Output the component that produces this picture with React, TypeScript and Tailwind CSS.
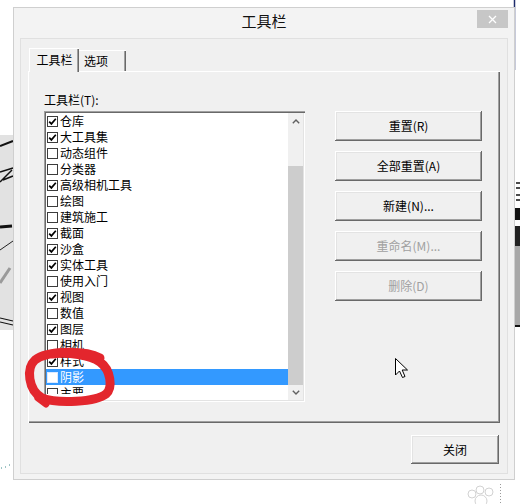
const toolbars: [string, boolean][] = [
  ['仓库', true],
  ['大工具集', true],
  ['动态组件', false],
  ['分类器', false],
  ['高级相机工具', true],
  ['绘图', false],
  ['建筑施工', false],
  ['截面', true],
  ['沙盒', true],
  ['实体工具', true],
  ['使用入门', false],
  ['视图', true],
  ['数值', false],
  ['图层', true],
  ['相机', false],
  ['样式', true],
  ['阴影', false],
  ['主要', false],
];

const SELECTED = 16;

const sideButtons = [
  { label: '重置(R)', disabled: false },
  { label: '全部重置(A)', disabled: false },
  { label: '新建(N)...', disabled: false },
  { label: '重命名(M)...', disabled: true },
  { label: '删除(D)', disabled: true },
];

const raised =
  'shadow-[inset_-1px_-1px_#696969,inset_1px_1px_#ffffff,inset_-2px_-2px_#a0a0a0,inset_2px_2px_#e3e3e3]';

function CheckBox({ checked, selected }: { checked: boolean; selected: boolean }) {
  return (
    <span
      className={`ml-[1px] mr-[2px] flex h-[11px] w-[11px] shrink-0 items-center justify-center border bg-white ${
        selected ? 'border-[#dbe9ff]' : 'border-[#3c3c3c]'
      }`}
    >
      {checked && (
        <svg width="9" height="9" viewBox="0 0 9 9">
          <path d="M1.2 4.6 L3.4 6.9 L7.8 1.8" fill="none" stroke="#000" strokeWidth="1.7" />
        </svg>
      )}
    </span>
  );
}

function Chevron({ up }: { up: boolean }) {
  return (
    <svg width="8" height="5" viewBox="0 0 8 5">
      <path
        d={up ? 'M0.8 4.2 L4 1 L7.2 4.2' : 'M0.8 0.8 L4 4 L7.2 0.8'}
        fill="none"
        stroke="#606060"
        strokeWidth="1.4"
      />
    </svg>
  );
}

function ListBox() {
  return (
    <div className="mt-[3px] flex h-[291px] w-[261px] p-[2px] shadow-[inset_1px_1px_#a0a0a0,inset_2px_2px_#696969,inset_-1px_-1px_#ffffff,inset_-2px_-2px_#e3e3e3]">
      {/* rows */}
      <div className="h-full w-[242px] bg-white">
        <div className="h-[281px] overflow-hidden">
          {toolbars.map(([name, checked], i) => {
            const selected = i === SELECTED;
            return (
              <div
                key={name}
                className={`flex h-[16px] items-center leading-[16px] ${
                  selected ? 'bg-[#3399ff] text-white' : 'text-black'
                }`}
              >
                <CheckBox checked={checked} selected={selected} />
                <span>{name}</span>
              </div>
            );
          })}
        </div>
      </div>

      {/* scrollbar */}
      <div className="flex h-full w-[15px] flex-col bg-[#f0f0f0]">
        <div className="flex h-[16px] items-center justify-center">
          <Chevron up />
        </div>
        <div className="flex flex-1 flex-col pt-[37px]">
          <div className="flex-1 bg-[#cdcdcd]" />
        </div>
        <div className="flex h-[15px] items-center justify-center">
          <Chevron up={false} />
        </div>
      </div>
    </div>
  );
}

export default function App() {
  return (
    <div className="relative h-[504px] w-[520px] overflow-hidden bg-white pl-[13px] pt-[7px] font-['Noto_Sans_CJK_SC','Noto_Sans',sans-serif] text-[12px] text-black">
      {/* background scene behind the dialog */}
      <svg className="absolute inset-0" width="520" height="504" viewBox="0 0 520 504">
        <rect x="0" y="135" width="13" height="195" fill="#e2e2e2" />
        <path d="M0 146 L13 141" stroke="#111" strokeWidth="2" />
        <path d="M0 172 L13 168 M0 182 L12 170 M3 180 L13 176" stroke="#111" strokeWidth="1.5" />
        <path d="M0 227 L12 226" stroke="#111" strokeWidth="3" />
        <path d="M0 250 L13 241" stroke="#222" strokeWidth="1" />
        <path d="M0 283 L10 268" stroke="#9a9a9a" strokeWidth="3" />
        <path d="M0 318 L13 321 M0 322 L13 325" stroke="#111" strokeWidth="1.2" />
        <path d="M514.5 0 L514.5 70" stroke="#1d2b6b" strokeWidth="1.5" />
        <rect x="515" y="245" width="5" height="80" fill="#a8a8a8" />
        <path d="M516 183 L520 183 M516 188 L520 188 M516 195 L520 195 M516 200 L520 200" stroke="#111" strokeWidth="1.5" />
        <rect x="515" y="208" width="5" height="12" fill="#111" />
        <rect x="515" y="226" width="5" height="20" fill="#222" />
        <path d="M515 326 L520 326" stroke="#111" strokeWidth="2" />
        <path d="M1 468 L2 468 M5 467 L6 467 M9 465 L10 465" stroke="#3a8a8a" strokeWidth="1" />
        <path d="M500.5 484 L500.5 504" stroke="#9a9a9a" strokeWidth="1" strokeDasharray="1 2" />
        <circle cx="472" cy="494" r="4" fill="none" stroke="#d2d2d2" />
        <circle cx="480" cy="490" r="4" fill="none" stroke="#d2d2d2" />
        <circle cx="489" cy="492" r="4" fill="none" stroke="#d2d2d2" />
        <circle cx="481" cy="501" r="6" fill="none" stroke="#d2d2d2" />
      </svg>

      {/* dialog */}
      <div className="relative flex h-[473px] w-[502px] flex-col border border-[#cfcfcf] bg-[#f3f3f3]">
        {/* title bar */}
        <div className="grid h-[30px] grid-cols-[1fr_auto_1fr]">
          <div />
          <div className="pt-[3px] text-[15px] leading-[20px] text-[#111]">工具栏</div>
          <div className="flex justify-end">
            <div className="mr-[6px] mt-[2px] flex h-[18px] w-[31px] items-center justify-center bg-[#c7c7c7]">
              <svg width="9" height="9" viewBox="0 0 9 9">
                <path d="M1 1 L8 8 M8 1 L1 8" stroke="#fff" strokeWidth="1.3" />
              </svg>
            </div>
          </div>
        </div>

        {/* client area */}
        <div className="mx-[6px] mb-[5px] flex flex-1 flex-col border border-[#e0e0e0] bg-[#f0f0f0] px-[7px] pt-[9px]">
          {/* tabs */}
          <div className="relative z-10 ml-[1px] flex h-[23px] items-end">
            <div className="-mb-px flex h-[24px] w-[50px] items-center justify-center border-l border-t border-white bg-[#f0f0f0] pb-[1px] shadow-[inset_-1px_0_#696969,inset_-2px_0_#a0a0a0]">
              工具栏
            </div>
            <div className="flex h-[21px] w-[47px] items-center border-t border-white pl-[5px] shadow-[inset_-1px_0_#696969,inset_-2px_0_#a0a0a0]">
              选项
            </div>
          </div>

          {/* tab panel */}
          <div className="flex h-[352px] border-l border-t border-white shadow-[inset_-1px_-1px_#696969,inset_-2px_-2px_#a0a0a0]">
            <div className="flex flex-col pl-[15px] pt-[20px]">
              <div className="leading-[16px]">工具栏(T):</div>
              <ListBox />
            </div>

            <div className="ml-[30px] flex flex-col gap-[10px] pt-[39px]">
              {sideButtons.map((b) => (
                <div
                  key={b.label}
                  className={`flex h-[30px] w-[147px] items-center justify-center bg-[#f0f0f0] ${raised} ${
                    b.disabled ? 'text-[#a0a0a0]' : 'text-black'
                  }`}
                >
                  {b.label}
                </div>
              ))}
            </div>
          </div>

          <div className="mt-[12px] flex justify-end pr-[1px]">
            <div className={`flex h-[29px] w-[88px] items-center justify-center bg-[#f0f0f0] ${raised}`}>
              关闭
            </div>
          </div>
        </div>
      </div>

      {/* red annotation ring and mouse pointer */}
      <svg className="pointer-events-none absolute inset-0" width="520" height="504" viewBox="0 0 520 504">
        <path
          d="M100 358 C85 350 48 350 35 360 C26 368 28 390 42 398 C58 404 96 402 106 394 C113 388 111 370 100 362 C90 355 68 352 52 354"
          fill="none"
          stroke="#e3262d"
          strokeWidth="9"
          strokeLinecap="round"
        />
        <path d="M38 398 L46 404" stroke="#e3262d" strokeWidth="7" strokeLinecap="round" />
        <path
          d="M395.5 358.5 L395.5 375 L399.5 371 L402.5 377.5 L405 376.5 L402.2 370 L407.5 370 Z"
          fill="#fff"
          stroke="#000"
          strokeWidth="1"
          strokeLinejoin="round"
        />
      </svg>
    </div>
  );
}
